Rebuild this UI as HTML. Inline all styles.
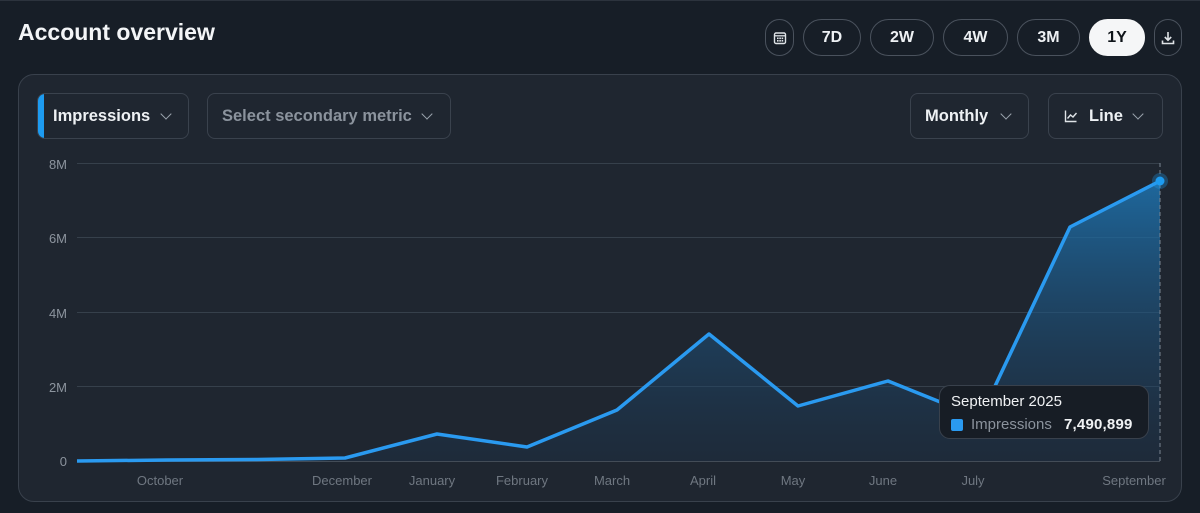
<!DOCTYPE html>
<html><head><style>
*{margin:0;padding:0;box-sizing:border-box}
body{width:1200px;height:513px;background:#171e27;font-family:"Liberation Sans",sans-serif;position:relative;overflow:hidden;color:#eef1f4}
.topline{position:absolute;left:0;top:0;width:1200px;height:1px;background:#2c333d}
h1{position:absolute;left:18px;top:19px;font-size:23px;font-weight:700;color:#f3f5f7}
.pill{position:absolute;top:19px;height:37px;border:1px solid #4a525d;border-radius:19px;font-size:16px;font-weight:700;display:flex;align-items:center;justify-content:center;color:#eef1f4}
.card{position:absolute;left:18px;top:74px;width:1164px;height:428px;background:#1f2630;border:1px solid #39414c;border-radius:16px}
.dd{position:absolute;top:93px;height:46px;border:1px solid #3a424d;border-radius:8px;font-size:16.5px;font-weight:700;display:flex;align-items:center;padding-left:14px;color:#eef1f4}
.chev{position:absolute;width:8px;height:8px;border-right:1.5px solid #9aa3ad;border-bottom:1.5px solid #9aa3ad;transform:rotate(45deg);top:16px}
.yl{position:absolute;left:40px;width:27px;text-align:right;font-size:13px;color:#8c949e}
.xl{position:absolute;top:473px;font-size:13px;color:#6f7781;transform:translateX(-50%)}
</style></head><body>
<div class="topline"></div>
<h1>Account overview</h1>
<div class="pill" style="left:765px;width:29px"><svg width="14" height="14" viewBox="0 0 14 14"><rect x="1.5" y="2" width="11" height="10.5" rx="1.5" fill="none" stroke="#dfe3e7" stroke-width="1.4"/><line x1="1.5" y1="4.8" x2="12.5" y2="4.8" stroke="#dfe3e7" stroke-width="1.3"/><g fill="#dfe3e7"><rect x="4" y="6.5" width="1.6" height="1.6"/><rect x="6.3" y="6.5" width="1.6" height="1.6"/><rect x="8.6" y="6.5" width="1.6" height="1.6"/><rect x="4" y="9" width="1.6" height="1.6"/><rect x="6.3" y="9" width="1.6" height="1.6"/><rect x="8.6" y="9" width="1.6" height="1.6"/></g></svg></div>
<div class="pill" style="left:803px;width:58px">7D</div>
<div class="pill" style="left:870px;width:64px">2W</div>
<div class="pill" style="left:943px;width:65px">4W</div>
<div class="pill" style="left:1017px;width:63px">3M</div>
<div class="pill" style="left:1089px;width:56px;background:#f5f6f7;color:#0f1419;border-color:#f5f6f7">1Y</div>
<div class="pill" style="left:1154px;width:28px"><svg width="16" height="16" viewBox="0 0 16 16" fill="none" stroke="#dfe3e7" stroke-width="1.6"><path d="M8 2v8M4.8 7l3.2 3.2L11.2 7M2.5 10.5v3h11v-3"/></svg></div>
<div class="card"></div>
<div class="dd" style="left:37px;width:152px;padding-left:15px;overflow:hidden">Impressions<span class="chev" style="left:124px"></span><span style="position:absolute;left:0;top:0;width:6px;height:46px;background:#1d9bf0;border-radius:8px 0 0 8px"></span></div>
<div class="dd" style="left:207px;width:244px;color:#8b939d">Select secondary metric<span class="chev" style="left:215px"></span></div>
<div class="dd" style="left:910px;width:119px">Monthly<span class="chev" style="left:91px"></span></div>
<div class="dd" style="left:1048px;width:115px;padding-left:15px"><svg width="14" height="14" viewBox="0 0 14 14" fill="none" stroke="#dfe3e7" stroke-width="1.4" style="margin-right:11px"><path d="M1.5 1.5v11h11M3.5 9.5l3-3.5 2.5 2 3.5-4"/></svg>Line<span class="chev" style="left:85px"></span></div>
<div class="yl" style="top:157px">8M</div>
<div class="yl" style="top:231px">6M</div>
<div class="yl" style="top:306px">4M</div>
<div class="yl" style="top:380px">2M</div>
<div class="yl" style="top:454px">0</div>
<svg style="position:absolute;left:0;top:0" width="1200" height="513">
<defs><linearGradient id="g" x1="0" y1="0" x2="0" y2="1"><stop offset="0" stop-color="#1d78b8" stop-opacity="0.8"/><stop offset="1" stop-color="#1d3550" stop-opacity="0.3"/></linearGradient></defs>
<g stroke="#36404b" stroke-width="1"><line x1="77" y1="163.5" x2="1160" y2="163.5"/><line x1="77" y1="237.5" x2="1160" y2="237.5"/><line x1="77" y1="312.5" x2="1160" y2="312.5"/><line x1="77" y1="386.5" x2="1160" y2="386.5"/><line x1="77" y1="461.5" x2="1160" y2="461.5" stroke="#434c57"/></g>
<path d="M77 461L167 460L257 459.5L345 458L437 434L527 447L617 410L709 334L798 406L888 381L980 418L1070 227L1160 181L1160 461L77 461Z" fill="url(#g)"/>
<path d="M77 461L167 460L257 459.5L345 458L437 434L527 447L617 410L709 334L798 406L888 381L980 418L1070 227L1160 181" fill="none" stroke="#2a9af0" stroke-width="3.5" stroke-linejoin="round"/>
<line x1="1160" y1="163" x2="1160" y2="461" stroke="#7b8592" stroke-dasharray="4 3"/>
<circle cx="1160" cy="181" r="8" fill="#1d9bf0" fill-opacity="0.3"/><circle cx="1160" cy="181" r="4.5" fill="#1d9bf0"/>
</svg>
<div class="xl" style="left:160px">October</div>
<div class="xl" style="left:342px">December</div>
<div class="xl" style="left:432px">January</div>
<div class="xl" style="left:522px">February</div>
<div class="xl" style="left:612px">March</div>
<div class="xl" style="left:703px">April</div>
<div class="xl" style="left:793px">May</div>
<div class="xl" style="left:883px">June</div>
<div class="xl" style="left:973px">July</div>
<div class="xl" style="left:1134px">September</div>
<div style="position:absolute;left:939px;top:385px;width:210px;height:54px;background:#171d25;border:1px solid #39414c;border-radius:11px">
<div style="position:absolute;left:11px;top:7px;font-size:15px;color:#f0f2f4">September 2025</div>
<div style="position:absolute;left:11px;top:33px;width:12px;height:12px;background:#2a9af0;border-radius:2px"></div>
<div style="position:absolute;left:31px;top:30px;font-size:15px;color:#8b939d">Impressions</div>
<div style="position:absolute;left:124px;top:30px;font-size:15px;color:#f0f2f4;font-weight:700;letter-spacing:0.2px">7,490,899</div>
</div>
</body></html>
